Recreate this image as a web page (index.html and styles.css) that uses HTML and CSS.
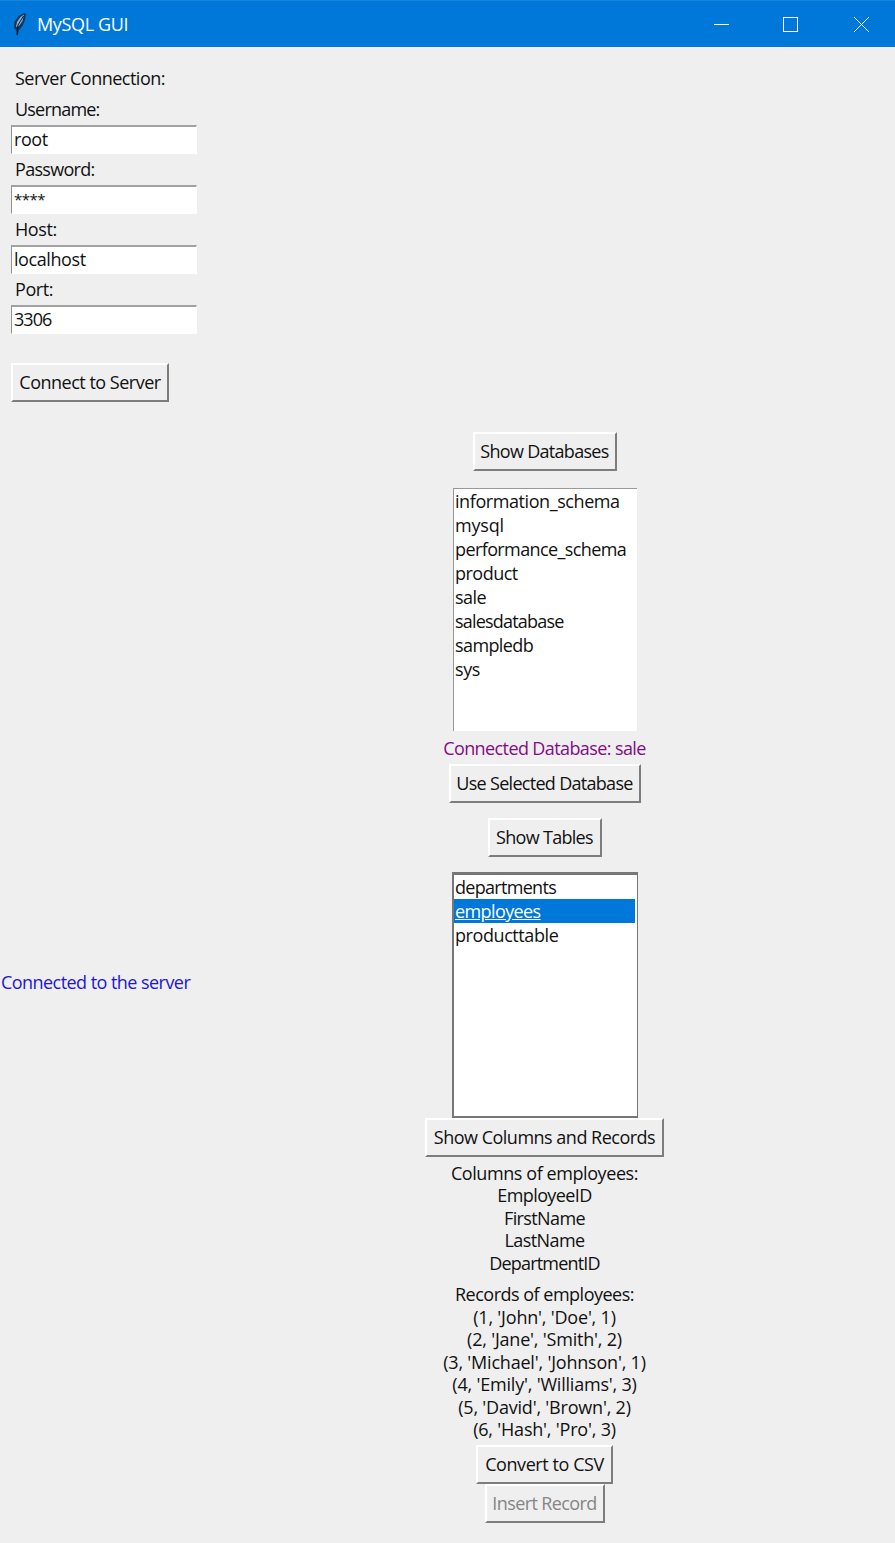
FILE: index.html
```html
<!DOCTYPE html>
<html lang="en">
<head>
<meta charset="utf-8">
<title>MySQL GUI</title>
<link rel="stylesheet" href="styles.css">
</head>
<body>
<header class="titlebar">
  <svg class="feather" width="15" height="25" viewBox="0 0 15 25">
    <path d="M12.5 1 L14 2 L13 8 L10.5 14 L7 18 L5.5 24 L4 18 L2 16 L2.5 10 L6.5 4 Z" fill="#12345a"/>
    <path d="M12 2.5 L8.5 5 L5 10 L4 15 L7 14 L10.5 9 Z" fill="#8db4d6"/>
    <path d="M11.5 4 L6 13 L5 23" stroke="#0a1220" stroke-width="1" fill="none"/>
  </svg>
  <h1 class="title">MySQL GUI</h1>
  <svg class="controls" width="162" height="17" viewBox="0 0 162 17" fill="none" stroke="#fff" stroke-width="1">
    <path d="M1 8.5H16"/>
    <rect x="70.5" y="1.5" width="14" height="14"/>
    <path d="M141 1L156 16M156 1L141 16"/>
  </svg>
</header>
<main class="window">
  <form class="login">
    <p class="heading">Server Connection:</p>
    <label class="label tightest">Username:</label>
    <div class="entry snug">root</div>
    <label class="label tighter">Password:</label>
    <div class="entry stars">****</div>
    <label class="label snug">Host:</label>
    <div class="entry snug">localhost</div>
    <label class="label snug">Port:</label>
    <div class="entry port">3306</div>
    <button type="button" class="button connect">Connect to Server</button>
  </form>
  <section class="workspace">
    <p class="status">Connected to the server</p>
    <div class="tools">
      <button class="button show-db tighter">Show Databases</button>
      <ul class="list databases">
        <li class="snug">information_schema</li>
        <li class="loose">mysql</li>
        <li class="tight">performance_schema</li>
        <li>product</li>
        <li>sale</li>
        <li class="tightest">salesdatabase</li>
        <li class="tight">sampledb</li>
        <li class="snug">sys</li>
      </ul>
      <p class="current tight">Connected Database: sale</p>
      <button class="button use-db tighter">Use Selected Database</button>
      <button class="button show-tables tighter">Show Tables</button>
      <ul class="list tables">
        <li class="tighter">departments</li>
        <li class="selected tight">employees</li>
        <li class="snug">producttable</li>
      </ul>
      <button class="button show-records">Show Columns and Records</button>
      <div class="output columns">
        <p class="snug">Columns of employees:</p>
        <p class="tight">EmployeeID</p>
        <p class="tight">FirstName</p>
        <p class="tight">LastName</p>
        <p class="tightest">DepartmentID</p>
      </div>
      <div class="output records">
        <p class="caption">Records of employees:</p>
        <p>(1, 'John', 'Doe', 1)</p>
        <p>(2, 'Jane', 'Smith', 2)</p>
        <p>(3, 'Michael', 'Johnson', 1)</p>
        <p>(4, 'Emily', 'Williams', 3)</p>
        <p>(5, 'David', 'Brown', 2)</p>
        <p>(6, 'Hash', 'Pro', 3)</p>
      </div>
      <button class="button convert snug">Convert to CSV</button>
      <button class="button insert tight" disabled>Insert Record</button>
    </div>
  </section>
</main>
</body>
</html>
```
FILE: styles.css
```css
* { box-sizing: border-box; margin: 0; padding: 0; }
body {
  width: 895px;
  height: 1543px;
  overflow: hidden;
  background: #efefef;
  color: #111;
  font: 18px/24px "Open Sans", "Noto Sans", sans-serif;
  letter-spacing: -0.5px;
  white-space: nowrap;
}
.titlebar {
  display: flex;
  align-items: center;
  height: 47px;
  padding: 0 20px 0 12px;
  background: #0078d9;
  border-top: 1px solid #1a84dc;
  color: #fff;
}
.title { flex: 1; margin-left: 10px; font-size: 18px; font-weight: 400; letter-spacing: -0.35px; }
.window { display: flex; flex-direction: column; }
.login {
  display: flex;
  flex-direction: column;
  align-items: flex-start;
  height: 385px;
  padding: 19px 0 0 11px;
}
.heading { height: 31px; padding-left: 4px; }
.label { height: 28px; padding: 0 0 0 4px; }
.entry {
  width: 186px;
  height: 29px;
  margin-bottom: 3px;
  padding-left: 2px;
  background: #fff;
  border: 1px solid #fff;
  border-top: 2px solid #a2a2a2;
  border-left: 1px solid #929292;
}
.stars { font-size: 15px; }
.port { letter-spacing: -0.95px; }
.button {
  flex: none;
  height: 39px;
  padding-bottom: 2px;
  background: #efefef;
  border: 2px solid;
  border-color: #fff #7d7d7d #7d7d7d #fff;
  color: #111;
  font: inherit;
  letter-spacing: -0.5px;
}
.connect { width: 158px; margin-top: 26px; }
.workspace { display: grid; grid-template-columns: 194px 701px; }
.status { align-self: start; padding: 538px 0 0 1px; color: #2015dd; letter-spacing: -0.55px; }
.tools { display: flex; flex-direction: column; align-items: center; }
.show-db { width: 144px; }
.list { flex: none; list-style: none; background: #fff; }
.list li { height: 24px; padding-left: 1.5px; }
.databases {
  width: 184px;
  height: 243px;
  margin-top: 17px;
  border-top: 1px solid #999;
  border-left: 1px solid #999;
}
.current { height: 33px; padding-top: 5px; color: #850b85; }
.use-db { width: 192px; }
.show-tables { width: 114px; margin-top: 15px; }
.tables {
  width: 186px;
  height: 246px;
  margin-top: 15px;
  padding-right: 2px;
  border: 2px solid #777;
  border-top-width: 3px;
  border-right-width: 1px;
}
.tables .selected { background: #0078d9; color: #fff; text-decoration: underline; }
.show-records { width: 239px; }
.output { text-align: center; line-height: 22.5px; }
.columns { margin-top: 4.5px; }
.records { margin-top: 9px; letter-spacing: -0.2px; }
.caption { letter-spacing: -0.5px; }
.convert { width: 137px; margin-top: 4.5px; }
.insert { width: 120px; color: #858585; }

/* Tracking steps */
.loose { letter-spacing: -0.2px; }
.snug { letter-spacing: -0.42px; }
.tight { letter-spacing: -0.6px; }
.tighter { letter-spacing: -0.7px; }
.tightest { letter-spacing: -0.8px; }
```
